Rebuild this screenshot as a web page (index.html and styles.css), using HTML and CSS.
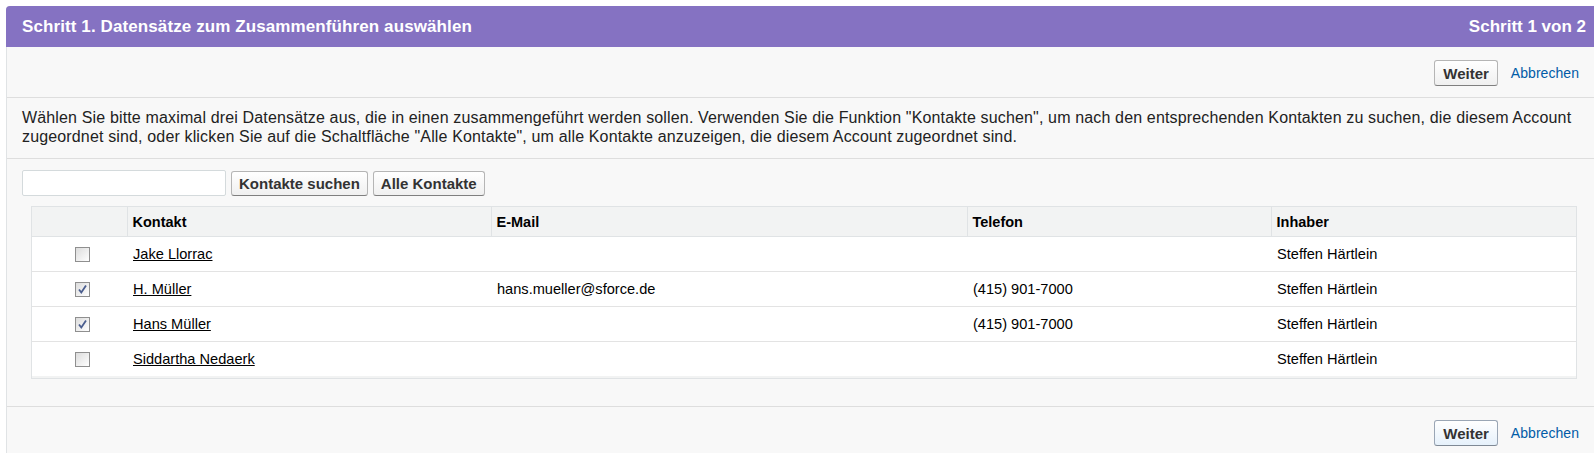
FILE: index.html
```html
<!DOCTYPE html>
<html lang="de">
<head>
<meta charset="utf-8">
<title>Datensätze zusammenführen</title>
<link rel="stylesheet" href="styles.css">
</head>
<body>
<div class="panel">
  <div class="pb-header">
    <h2 class="pb-title">Schritt 1. Datensätze zum Zusammenführen auswählen</h2>
    <span class="pb-step">Schritt 1 von 2</span>
  </div>
  <div class="btn-row top-row">
    <button class="btn" type="button">Weiter</button>
    <a class="cancel" href="#">Abbrechen</a>
  </div>
  <div class="desc">Wählen Sie bitte maximal drei Datensätze aus, die in einen zusammengeführt werden sollen. Verwenden Sie die Funktion "Kontakte suchen", um nach den entsprechenden Kontakten zu suchen, die diesem Account zugeordnet sind, oder klicken Sie auf die Schaltfläche "Alle Kontakte", um alle Kontakte anzuzeigen, die diesem Account zugeordnet sind.</div>
  <div class="search-area">
    <div class="search-bar">
      <input class="search-input" type="text">
      <button class="btn small" type="button">Kontakte suchen</button>
      <button class="btn small" type="button">Alle Kontakte</button>
    </div>
    <div class="list-wrap">
      <table class="list">
        <colgroup>
          <col class="c-check"><col class="c-name"><col class="c-mail"><col class="c-phone"><col class="c-owner">
        </colgroup>
        <thead>
          <tr><th></th><th>Kontakt</th><th>E-Mail</th><th>Telefon</th><th>Inhaber</th></tr>
        </thead>
        <tbody>
          <tr>
            <td class="cb-cell"><span class="cb"></span></td>
            <td><a href="#" class="rec">Jake Llorrac</a></td>
            <td></td><td></td><td>Steffen Härtlein</td>
          </tr>
          <tr>
            <td class="cb-cell"><span class="cb checked"><svg viewBox="0 0 13 13" width="13" height="13"><path d="M3 6.5 L5.3 9.5 L10 2.5" fill="none" stroke="#4a5d8e" stroke-width="1.8"/></svg></span></td>
            <td><a href="#" class="rec">H. Müller</a></td>
            <td>hans.mueller@sforce.de</td><td>(415) 901-7000</td><td>Steffen Härtlein</td>
          </tr>
          <tr>
            <td class="cb-cell"><span class="cb checked"><svg viewBox="0 0 13 13" width="13" height="13"><path d="M3 6.5 L5.3 9.5 L10 2.5" fill="none" stroke="#4a5d8e" stroke-width="1.8"/></svg></span></td>
            <td><a href="#" class="rec">Hans Müller</a></td>
            <td></td><td>(415) 901-7000</td><td>Steffen Härtlein</td>
          </tr>
          <tr class="last">
            <td class="cb-cell"><span class="cb"></span></td>
            <td><a href="#" class="rec">Siddartha Nedaerk</a></td>
            <td></td><td></td><td>Steffen Härtlein</td>
          </tr>
        </tbody>
      </table>
    </div>
  </div>
  <div class="btn-row bottom-row">
    <button class="btn focus" type="button">Weiter</button>
    <a class="cancel" href="#">Abbrechen</a>
  </div>
</div>
</body>
</html>
```
FILE: styles.css
```css
html, body {
  margin: 0;
  padding: 0;
  background: #ffffff;
}
body {
  padding: 6px 0 0 6px;
  font-family: "Liberation Sans", Arial, sans-serif;
  font-size: 15px;
  color: #222;
  overflow: hidden;
}
.panel {
  background: #f8f8f8;
  border-left: 1px solid #e0e3e5;
  border-radius: 4px 0 0 0;
}
.pb-header {
  background: #8572c2;
  height: 41px;
  margin-left: -1px;
  border-radius: 4px 0 0 0;
  display: flex;
  align-items: center;
  justify-content: space-between;
  padding: 0 8px 0 16px;
  color: #ffffff;
}
.pb-title {
  margin: 0;
  font-size: 17px;
  letter-spacing: 0.1px;
  font-weight: bold;
}
.pb-step {
  font-size: 17px;
  font-weight: bold;
}
.btn-row {
  display: flex;
  justify-content: flex-end;
  align-items: center;
  gap: 13px;
  padding: 13px 15px 11px 15px;
}
.top-row {
  border-bottom: 1px solid #dedede;
}
.bottom-row {
  border-top: 1px solid #dedede;
  padding-top: 13px;
}
.btn {
  font-family: "Liberation Sans", Arial, sans-serif;
  font-weight: bold;
  font-size: 15px;
  color: #333;
  height: 26px;
  padding: 0 8px;
  border: 1px solid #b5b5b5;
  border-bottom-color: #7f7f7f;
  border-radius: 3px;
  background: linear-gradient(#ffffff, #f0f0f0);
}
.btn.focus {
  background: linear-gradient(#ffffff, #e6f1fb);
  border-color: #9aa6b5;
  border-bottom-color: #7f8995;
}
.btn.small {
  height: 25px;
  padding: 0 7px;
}
.cancel {
  color: #015ba7;
  text-decoration: none;
  font-size: 14px;
  letter-spacing: 0.05px;
}
.desc {
  padding: 10px 15px 12px 15px;
  font-size: 16px;
  letter-spacing: 0.15px;
  line-height: 19px;
  border-bottom: 1px solid #dedede;
  color: #222;
}
.search-area {
  padding: 11px 0 27px 15px;
}
.search-bar {
  display: flex;
  align-items: center;
  gap: 5px;
}
.search-input {
  width: 204px;
  height: 26px;
  box-sizing: border-box;
  border: 1px solid #d4dadc;
  border-radius: 2px;
  background: #ffffff;
  margin: 0;
  padding: 0 4px;
}
.list-wrap {
  margin: 10px 0 0 9px;
  width: 1546px;
  box-sizing: border-box;
  border: 1px solid #e0e3e5;
  padding-bottom: 2px;
  background: #f2f3f3;
}
.list {
  width: 1544px;
  border-collapse: collapse;
  table-layout: fixed;
  background: #ffffff;
}
.c-check { width: 95px; }
.c-name { width: 364px; }
.c-mail { width: 476px; }
.c-phone { width: 304px; }
.c-owner { width: 305px; }
.list th {
  background: #f2f3f3;
  height: 29px;
  padding: 0 5px;
  text-align: left;
  font-size: 14.5px;
  font-weight: bold;
  color: #000;
  border-bottom: 1px solid #e0e3e5;
  border-left: 1px solid #e0e3e5;
}
.list th:first-child {
  border-left: none;
}
.list td {
  height: 34px;
  padding: 0 5px 0 6px;
  font-size: 14.6px;
  border-bottom: 1px solid #e3e3e3;
  color: #000;
  white-space: nowrap;
}
.list tr.last td {
  border-bottom: none;
}
.list td.cb-cell {
  text-align: right;
  padding: 0 37px 0 0;
  line-height: 0;
}
.rec {
  color: #000;
  text-decoration: underline;
}
.cb {
  display: inline-block;
  width: 13px;
  height: 13px;
  border: 1px solid #8f8f8f;
  background: linear-gradient(135deg, #dcdcdc, #ffffff);
  position: relative;
  vertical-align: middle;
}
.cb svg {
  position: absolute;
  left: 0;
  top: 0;
}
```
